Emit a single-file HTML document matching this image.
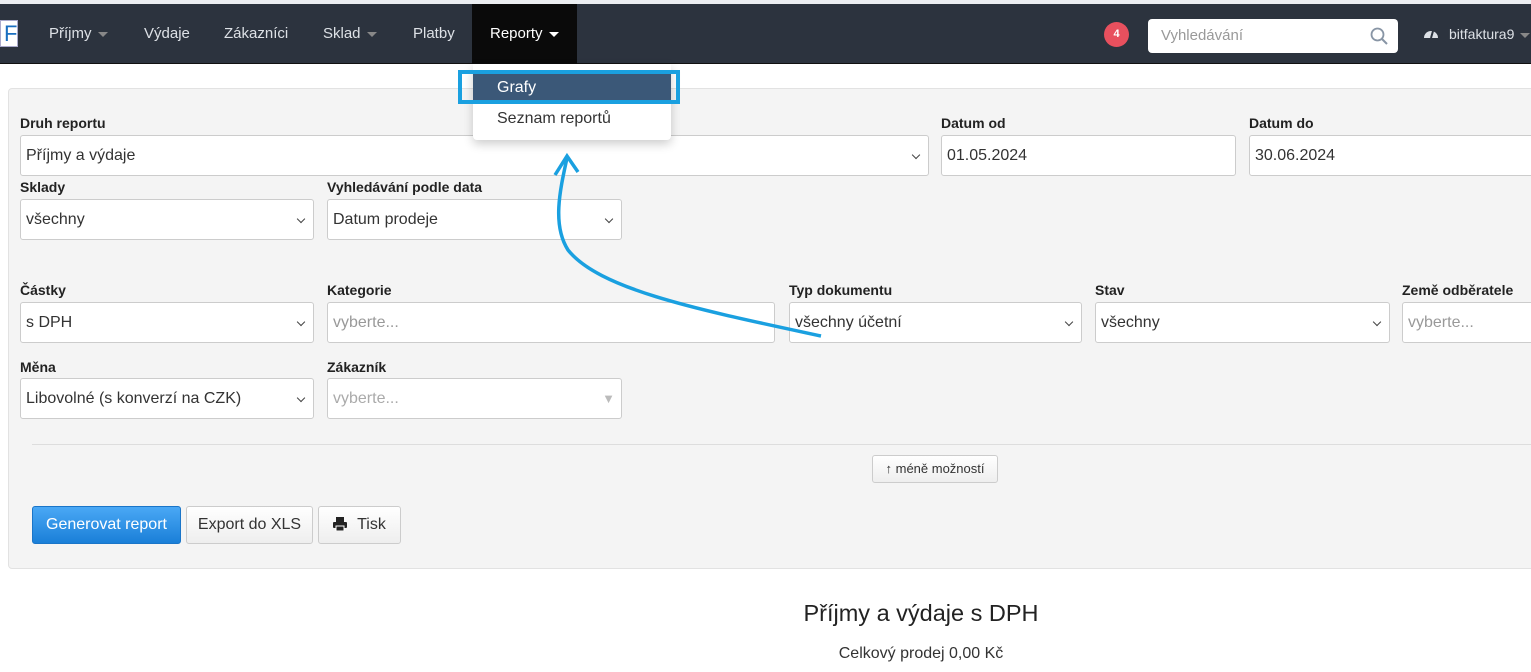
<!DOCTYPE html>
<html><head><meta charset="utf-8"><style>
*{box-sizing:border-box}
body{margin:0;width:1531px;height:672px;overflow:hidden;background:#fff;font-family:"Liberation Sans",Arial,sans-serif;position:relative;color:#333}
.a{position:absolute}
.nav{left:0;top:4px;width:1531px;height:60px;background:#2c333e;border-bottom:1px solid #111}
.ni{top:4px;height:60px;line-height:60px;color:#dde1e6;font-size:15px}
.car{display:inline-block;width:0;height:0;border-left:5px solid transparent;border-right:5px solid transparent;border-top:5px solid #888;vertical-align:middle;margin-left:6px}
.lbl{font-weight:bold;font-size:14px;color:#222}
.in{background:#fff;border:1px solid #ccc;border-radius:3px;height:41px;font-size:16px;line-height:39px;padding-left:5px;color:#333}
.sel::after{content:"";position:absolute;right:9px;top:16px;width:5px;height:5px;border-right:1.5px solid #444;border-bottom:1.5px solid #444;transform:rotate(45deg)}
.btn{border:1px solid #ccc;border-radius:3px;background:linear-gradient(#fff,#eee);font-size:16px;text-align:center;line-height:35px;color:#333}
</style></head><body>
<div class="a" style="left:0;top:0;width:1531px;height:4px;background:#eceef1"></div>
<div class="a nav"></div>
<div class="a" style="left:0;top:20px;width:18px;height:27px;background:#fff;border:1px solid #aac;color:#1a6fc0;font-size:22px;line-height:25px;padding-left:3px">F</div>
<div class="a ni" style="left:49px">Příjmy<span class="car"></span></div>
<div class="a ni" style="left:144px">Výdaje</div>
<div class="a ni" style="left:224px">Zákazníci</div>
<div class="a ni" style="left:323px">Sklad<span class="car"></span></div>
<div class="a ni" style="left:413px">Platby</div>
<div class="a" style="left:472px;top:4px;width:105px;height:60px;background:#0a0a0a"></div>
<div class="a ni" style="left:490px;color:#fff">Reporty<span class="car" style="border-top-color:#fff"></span></div>
<div class="a" style="left:1104px;top:22px;width:25px;height:25px;border-radius:50%;background:#e8505e;color:#fff;font-size:11px;font-weight:bold;text-align:center;line-height:25px">4</div>
<div class="a" style="left:1148px;top:19px;width:250px;height:34px;background:#fff;border-radius:4px;color:#999;font-size:15px;line-height:34px;padding-left:13px">Vyhledávání
<svg class="a" style="right:10px;top:8px" width="18" height="18" viewBox="0 0 18 18"><circle cx="7.5" cy="7.5" r="6" fill="none" stroke="#8895a5" stroke-width="1.8"/><path d="M12 12L17 17" stroke="#8895a5" stroke-width="2"/></svg></div>
<svg class="a" style="left:1423px;top:26px" width="16" height="14" viewBox="0 0 16 14"><path d="M1 12A7 7 0 1 1 15 12Z" fill="#dde1e6"/><path d="M8 12L10 5" stroke="#2c333e" stroke-width="2"/></svg>
<div class="a ni" style="left:1449px;font-size:14px">bitfaktura9<span class="car"></span></div>

<div class="a" style="left:8px;top:88px;width:1540px;height:481px;background:#f4f4f4;border:1px solid #e2e2e2;border-radius:4px"></div>

<div class="a lbl" style="left:20px;top:115px">Druh reportu</div>
<div class="a in sel" style="left:20px;top:135px;width:909px">Příjmy a výdaje</div>
<div class="a lbl" style="left:941px;top:115px">Datum od</div>
<div class="a in" style="left:941px;top:135px;width:295px">01.05.2024</div>
<div class="a lbl" style="left:1249px;top:115px">Datum do</div>
<div class="a in" style="left:1249px;top:135px;width:300px">30.06.2024</div>

<div class="a lbl" style="left:20px;top:179px">Sklady</div>
<div class="a in sel" style="left:20px;top:199px;width:294px">všechny</div>
<div class="a lbl" style="left:327px;top:179px">Vyhledávání podle data</div>
<div class="a in sel" style="left:327px;top:199px;width:295px">Datum prodeje</div>

<div class="a lbl" style="left:20px;top:282px">Částky</div>
<div class="a in sel" style="left:20px;top:302px;width:294px">s DPH</div>
<div class="a lbl" style="left:327px;top:282px">Kategorie</div>
<div class="a in" style="left:327px;top:302px;width:448px;color:#999">vyberte...</div>
<div class="a lbl" style="left:789px;top:282px">Typ dokumentu</div>
<div class="a in sel" style="left:789px;top:302px;width:293px">všechny účetní</div>
<div class="a lbl" style="left:1095px;top:282px">Stav</div>
<div class="a in sel" style="left:1095px;top:302px;width:295px">všechny</div>
<div class="a lbl" style="left:1402px;top:282px">Země odběratele</div>
<div class="a in" style="left:1402px;top:302px;width:150px;color:#999">vyberte...</div>

<div class="a lbl" style="left:20px;top:359px">Měna</div>
<div class="a in sel" style="left:20px;top:378px;width:294px">Libovolné (s konverzí na CZK)</div>
<div class="a lbl" style="left:327px;top:359px">Zákazník</div>
<div class="a in" style="left:327px;top:378px;width:295px;color:#aaa">vyberte...<span class="a" style="right:6px;top:0;font-size:13px;color:#bbb">▼</span></div>

<div class="a" style="left:32px;top:444px;width:1500px;height:1px;background:#ddd"></div>
<div class="a btn" style="left:872px;top:455px;width:126px;height:28px;line-height:26px;font-size:13px">↑ méně možností</div>

<div class="a btn" style="left:32px;top:506px;width:149px;height:38px;background:linear-gradient(#4aa8f5,#1a7fd8);border-color:#1a75c8;color:#fff">Generovat report</div>
<div class="a btn" style="left:186px;top:506px;width:127px;height:38px">Export do XLS</div>
<div class="a btn" style="left:318px;top:506px;width:83px;height:38px"><svg style="vertical-align:-2px;margin-right:10px" width="14" height="14" viewBox="0 0 14 14"><rect x="3" y="0" width="8" height="5" fill="#222"/><rect x="0" y="5" width="14" height="6" rx="1" fill="#222"/><rect x="3" y="9" width="8" height="5" fill="#222" stroke="#fff" stroke-width="1"/></svg>Tisk</div>

<div class="a" style="left:0;top:600px;width:1842px;text-align:center;font-size:23.5px;color:#222">Příjmy a výdaje s DPH</div>
<div class="a" style="left:0;top:645px;width:1842px;text-align:center;font-size:16px;color:#333">Celkový prodej 0,00 Kč</div>

<div class="a" style="left:473px;top:64px;width:198px;height:76px;background:#fff;border-radius:0 0 4px 4px;box-shadow:0 4px 10px rgba(0,0,0,.2)"></div>
<div class="a" style="left:473px;top:72px;width:198px;height:28px;background:#3b5878"></div>
<div class="a" style="left:458px;top:70px;width:222px;height:34px;border:4px solid #1aa0e0"></div>
<div class="a" style="left:497px;top:79px;color:#fff;font-size:16px">Grafy</div>
<div class="a" style="left:497px;top:110px;color:#333;font-size:16px">Seznam reportů</div>

<svg class="a" style="left:0;top:0" width="1531" height="672"><path d="M821 336C700 310 600 290 568 250C552 225 560 190 567 158" fill="none" stroke="#1aa0e0" stroke-width="3.5"/><path d="M555 175L567 156L578 172" fill="none" stroke="#1aa0e0" stroke-width="3.5"/></svg>
</body></html>
